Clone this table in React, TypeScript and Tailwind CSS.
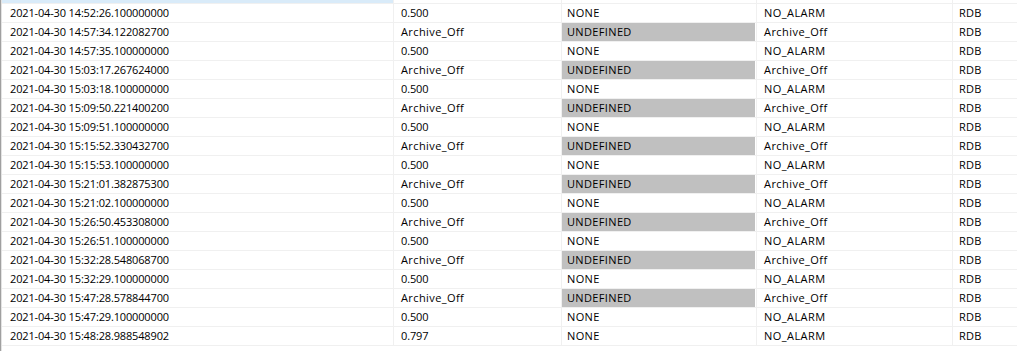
const rows: [string, string][] = [
  ['2021-04-30 14:52:26.100000000', '0.500'],
  ['2021-04-30 14:57:34.122082700', 'Archive_Off'],
  ['2021-04-30 14:57:35.100000000', '0.500'],
  ['2021-04-30 15:03:17.267624000', 'Archive_Off'],
  ['2021-04-30 15:03:18.100000000', '0.500'],
  ['2021-04-30 15:09:50.221400200', 'Archive_Off'],
  ['2021-04-30 15:09:51.100000000', '0.500'],
  ['2021-04-30 15:15:52.330432700', 'Archive_Off'],
  ['2021-04-30 15:15:53.100000000', '0.500'],
  ['2021-04-30 15:21:01.382875300', 'Archive_Off'],
  ['2021-04-30 15:21:02.100000000', '0.500'],
  ['2021-04-30 15:26:50.453308000', 'Archive_Off'],
  ['2021-04-30 15:26:51.100000000', '0.500'],
  ['2021-04-30 15:32:28.548068700', 'Archive_Off'],
  ['2021-04-30 15:32:29.100000000', '0.500'],
  ['2021-04-30 15:47:28.578844700', 'Archive_Off'],
  ['2021-04-30 15:47:29.100000000', '0.500'],
  ['2021-04-30 15:48:28.988548902', '0.797'],
];

const Row = ({ time, value }: { time: string; value: string }) => {
  const off = value === 'Archive_Off';
  return (
    <div className="flex h-[19px] border-b border-[#f0f0f0] leading-[18px]">
      <div className="w-[392px] shrink-0 border-r border-[#f0f0f0] pl-[8px] tracking-[-0.15px]">{time}</div>
      <div className={`w-[168px] shrink-0 border-r border-[#f0f0f0] pl-[7px] ${off ? 'tracking-[0.4px]' : 'tracking-[-0.15px]'}`}>
        {value}
      </div>
      <div className="w-[195px] shrink-0 border-r border-[#f0f0f0] pr-[1px] tracking-[0.35px]">
        <div className={`h-full pl-[5px] ${off ? 'bg-[#c0c0c0]' : ''}`}>{off ? 'UNDEFINED' : 'NONE'}</div>
      </div>
      <div className="w-[196px] shrink-0 border-r border-[#f0f0f0] pl-[7px] tracking-[0.45px]">
        {off ? 'Archive_Off' : 'NO_ALARM'}
      </div>
      <div className="flex-1 pl-[6px] tracking-[0.2px]">RDB</div>
    </div>
  );
};

export default function App() {
  return (
    <div className="h-[351px] w-[1017px] overflow-hidden bg-white">
      <div className="h-full border-l border-[#a0a0a0]">
        <div className="h-full border-l border-[#e3e3e3] text-[11px] text-black [font-family:'Open_Sans',sans-serif]">
          <div className="flex h-[4px] border-b border-[#f0f0f0]">
            <div className="w-[392px] shrink-0 border-r border-[#f0f0f0] bg-[#d9ebf9]" />
            <div className="w-[168px] shrink-0 border-r border-[#f0f0f0]" />
            <div className="w-[195px] shrink-0 border-r border-[#f0f0f0]" />
            <div className="w-[196px] shrink-0 border-r border-[#f0f0f0]" />
          </div>
          {rows.map(([t, v]) => (
            <Row key={t} time={t} value={v} />
          ))}
        </div>
      </div>
    </div>
  );
}
